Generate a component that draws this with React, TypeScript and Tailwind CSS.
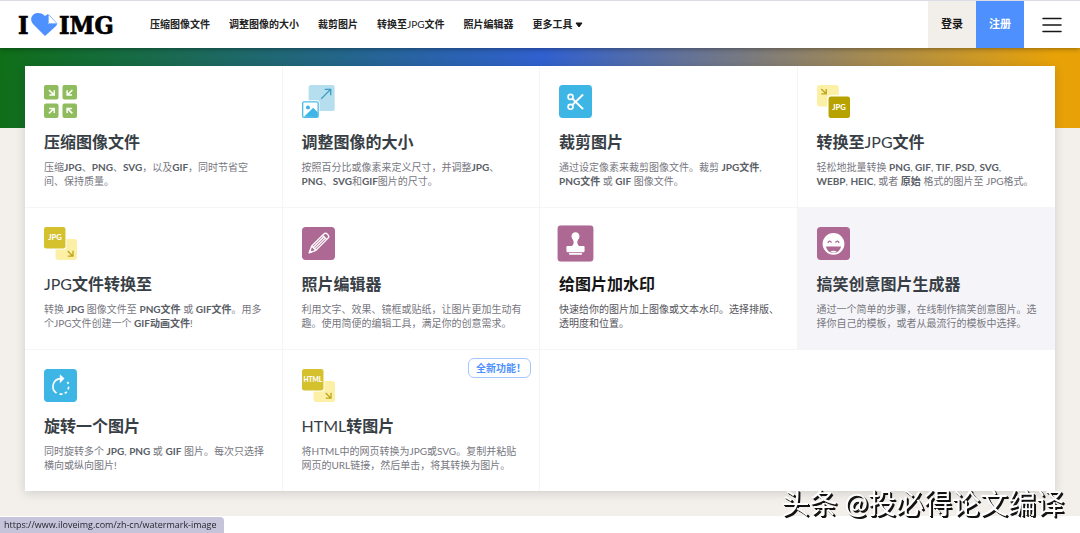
import type { ReactNode } from "react";

type Tool = {
  title: ReactNode;
  text: ReactNode;
  icon: ReactNode;
  slug: string;
  state?: "hover" | "muted";
  badge?: string;
};

const Thin = ({ children }: { children: ReactNode }) => (
  <span className="font-normal">{children}</span>
);

const Icon = ({ children }: { children: ReactNode }) => (
  <svg viewBox="0 0 100 100" className="w-full h-full" aria-hidden="true">
    {children}
  </svg>
);

const CompressIcon = () => (
  <Icon>
    <g fill="#8fbc5d">
      <rect width="44" height="44" rx="6" />
      <rect x="56" width="44" height="44" rx="6" />
      <rect y="56" width="44" height="44" rx="6" />
      <rect x="56" y="56" width="44" height="44" rx="6" />
    </g>
    <g fill="none" stroke="#fff" strokeWidth="4.5">
      <path d="M15 15 30 30M31 16V30H16" />
      <path d="M86 15 71 30M70 16V30H85" />
      <path d="M15 86 30 71M31 85V71H16" />
      <path d="M86 86 71 71M70 85V71H85" />
    </g>
  </Icon>
);

const ResizeIcon = () => (
  <Icon>
    <rect x="20" width="79" height="79" rx="8" fill="#b5dfef" />
    <path
      d="M58 42 87 13M69 13H87V31"
      fill="none"
      stroke="#3a9cc2"
      strokeWidth="4"
    />
    <rect x="-3" y="46" width="56" height="57" rx="7" fill="#fff" />
    <rect
      x="2"
      y="51"
      width="47"
      height="47"
      rx="4"
      fill="#fff"
      stroke="#4cbbe6"
      strokeWidth="4"
    />
    <circle cx="18" cy="68" r="6" fill="#3db6e5" />
    <path d="M6 96 34 69 48 83V97Z" fill="#3db6e5" />
  </Icon>
);

const CropIcon = () => (
  <Icon>
    <rect width="100" height="100" rx="11" fill="#3db6e5" />
    <g fill="none" stroke="#fff" strokeWidth="5">
      <circle cx="35" cy="36" r="7.5" />
      <circle cx="35" cy="66" r="7.5" />
      <path d="M40 41 73 73M40 61 73 29" strokeWidth="6" />
    </g>
  </Icon>
);

const ToJpgIcon = () => (
  <Icon>
    <rect width="66" height="65" rx="8" fill="#fcf0a6" />
    <path
      d="M13 12 27 26M28 12V27H13"
      fill="none"
      stroke="#bda51b"
      strokeWidth="4"
    />
    <rect x="31" y="31" width="72" height="72" rx="9" fill="#fff" />
    <rect x="35" y="35" width="65" height="65" rx="7" fill="#b7a200" />
    <text
      x="67"
      y="75"
      textAnchor="middle"
      fontSize="23"
      fontWeight="900"
      fill="#fff"
    >
      JPG
    </text>
  </Icon>
);

const FromIcon = ({ label, size }: { label: string; size: number }) => (
  <Icon>
    <rect x="35" y="36" width="65" height="64" rx="8" fill="#fcf0a6" />
    <path
      d="M72 73 86 87M88 72V88H72"
      fill="none"
      stroke="#bda51b"
      strokeWidth="4"
    />
    <rect x="-3" y="-3" width="71" height="71" rx="9" fill="#fff" />
    <rect width="65" height="65" rx="7" fill="#d5c02e" />
    <text
      x="33"
      y="40"
      textAnchor="middle"
      fontSize={size}
      fontWeight="900"
      fill="#fff"
    >
      {label}
    </text>
  </Icon>
);

const EditorIcon = () => (
  <Icon>
    <rect width="100" height="100" rx="11" fill="#ad6993" />
    <g
      fill="none"
      stroke="#fff"
      strokeWidth="4"
      strokeLinejoin="round"
      transform="rotate(45 50 50)"
    >
      <path d="M41 18Q41 11 50 11Q59 11 59 18V70L50 90L41 70Z" />
      <path d="M41 24H59M47 26V68M53 26V68M41 70H59" />
      <path d="M47 83H53L50 89Z" fill="#fff" />
    </g>
  </Icon>
);

const StampIcon = () => (
  <Icon>
    <rect width="100" height="100" rx="11" fill="#ad6993" />
    <g fill="#fff">
      <path d="M50 19C57 19 61 24 61 30C61 37 55 40 55 46C55 51 57 54 60 57H40C43 54 45 51 45 46C45 40 39 37 39 30C39 24 43 19 50 19Z" />
      <rect x="25" y="57" width="50" height="17" rx="3" />
      <rect x="32" y="76" width="36" height="5" rx="2" />
    </g>
  </Icon>
);

const MemeIcon = () => (
  <Icon>
    <rect width="100" height="100" rx="11" fill="#ad6993" />
    <circle cx="50" cy="51" r="33" fill="#fff" />
    <path
      d="M33 48Q38 38 44 47M56 47Q62 38 67 48"
      fill="none"
      stroke="#ad6993"
      strokeWidth="4"
    />
    <path d="M27 59H73Q69 78 50 78Q31 78 27 59Z" fill="#ad6993" />
    <path d="M40 75Q50 69 60 75Q50 79 40 75Z" fill="#fff" />
  </Icon>
);

const RotateIcon = () => (
  <Icon>
    <rect width="100" height="100" rx="11" fill="#3db6e5" />
    <path d="M48 16 62 29 48 43Z" fill="#fff" />
    <g fill="none" stroke="#fff" strokeWidth="5">
      <path d="M50 29A24 24 0 0 0 38 73" />
      <path d="M47 76H56M63 74 69 69M73 62 75 54M74 45 71 39" />
    </g>
  </Icon>
);

const nav: { label: ReactNode; slug: string }[] = [
  { label: "压缩图像文件", slug: "compress-image" },
  { label: "调整图像的大小", slug: "resize-image" },
  { label: "裁剪图片", slug: "crop-image" },
  {
    label: (
      <>
        转换至<Thin>JPG</Thin>文件
      </>
    ),
    slug: "convert-to-jpg",
  },
  { label: "照片编辑器", slug: "photo-editor" },
];

const tools: Tool[] = [
  {
    title: "压缩图像文件",
    slug: "compress-image",
    icon: <CompressIcon />,
    text: (
      <>
        压缩<b>JPG</b>、<b>PNG</b>、<b>SVG</b>，以及<b>GIF</b>
        ，同时节省空间、保持质量。
      </>
    ),
  },
  {
    title: "调整图像的大小",
    slug: "resize-image",
    icon: <ResizeIcon />,
    text: (
      <>
        按照百分比或像素来定义尺寸，并调整<b>JPG</b>、<b>PNG</b>、<b>SVG</b>和
        <b>GIF</b>图片的尺寸。
      </>
    ),
  },
  {
    title: "裁剪图片",
    slug: "crop-image",
    icon: <CropIcon />,
    text: (
      <>
        通过设定像素来裁剪图像文件。裁剪 <b>JPG文件</b>, <b>PNG文件</b> 或{" "}
        <b>GIF</b> 图像文件。
      </>
    ),
  },
  {
    title: (
      <>
        转换至<Thin>JPG</Thin>文件
      </>
    ),
    slug: "convert-to-jpg",
    icon: <ToJpgIcon />,
    text: (
      <>
        轻松地批量转换 <b>PNG</b>, <b>GIF</b>, <b>TIF</b>, <b>PSD</b>,{" "}
        <b>SVG</b>,
        <br />
        <b>WEBP</b>, <b>HEIC</b>, 或者 <b>原始</b> 格式的图片至 JPG格式。
      </>
    ),
  },
  {
    title: (
      <>
        <Thin>JPG</Thin>文件转换至
      </>
    ),
    slug: "convert-from-jpg",
    icon: <FromIcon label="JPG" size={23} />,
    text: (
      <>
        转换 <b>JPG</b> 图像文件至 <b>PNG文件</b> 或 <b>GIF文件</b>
        。用多个JPG文件创建一个 <b>GIF动画文件</b>!
      </>
    ),
  },
  {
    title: "照片编辑器",
    slug: "photo-editor",
    icon: <EditorIcon />,
    text: "利用文字、效果、镜框或贴纸，让图片更加生动有趣。使用简便的编辑工具，满足你的创意需求。",
  },
  {
    title: "给图片加水印",
    slug: "watermark-image",
    icon: <StampIcon />,
    state: "hover",
    text: "快速给你的图片加上图像或文本水印。选择排版、透明度和位置。",
  },
  {
    title: "搞笑创意图片生成器",
    slug: "meme-generator",
    icon: <MemeIcon />,
    state: "muted",
    text: "通过一个简单的步骤，在线制作搞笑创意图片。选择你自己的模板，或者从最流行的模板中选择。",
  },
  {
    title: "旋转一个图片",
    slug: "rotate-image",
    icon: <RotateIcon />,
    text: (
      <>
        同时旋转多个 <b>JPG</b>, <b>PNG</b> 或 <b>GIF</b>{" "}
        图片。每次只选择横向或纵向图片!
      </>
    ),
  },
  {
    title: (
      <>
        <Thin>HTML</Thin>转图片
      </>
    ),
    slug: "html-to-image",
    icon: <FromIcon label="HTML" size={20} />,
    badge: "全新功能！",
    text: "将HTML中的网页转换为JPG或SVG。复制并粘贴网页的URL链接，然后单击，将其转换为图片。",
  },
];

const Logo = () => (
  <a href="#home" aria-label="I love IMG" className="w-[95px] shrink-0">
    <svg viewBox="0 0 95 32" className="w-full overflow-visible">
      <g
        fontFamily="'DejaVu Serif Condensed', 'DejaVu Serif', serif"
        fontWeight="700"
        fontSize="25"
        stroke="#000"
        strokeWidth="0.7"
      >
        <text x="0" y="25">
          I
        </text>
        <text x="41" y="25">
          IMG
        </text>
      </g>
      <path
        d="M27 27 15 15C11 10 14 4 20 4C23 4 25 5 27 7L30 5V15H39C39 16 38 17 37 18Z"
        fill="#4d90fe"
      />
      <path
        d="M30.5 5.500 39 14.500H30.500Z"
        fill="#fff"
        stroke="#8db7fe"
        strokeWidth="1"
      />
    </svg>
  </a>
);

const Header = () => (
  <header className="relative z-10 flex h-12 items-stretch border-t border-[#dcdce4] bg-white pl-[18px] shadow-[0_1px_5px_rgba(0,0,0,0.35)]">
    <div className="flex flex-1 items-center gap-[37px]">
      <Logo />
      <nav className="flex items-center gap-[19px] whitespace-nowrap text-[10px] font-bold text-[#222]">
        {nav.map(({ label, slug }) => (
          <a key={slug} href={`#${slug}`}>
            {label}
          </a>
        ))}
        <button type="button" className="flex items-center gap-0.5">
          更多工具
          <svg viewBox="0 0 8 6" className="w-2 h-1.5" aria-hidden="true">
            <path d="M1 1H7L4 5Z" fill="#161616" stroke="#161616" />
          </svg>
        </button>
      </nav>
    </div>
    <a
      href="#login"
      className="flex w-12 items-center justify-center bg-[#f2efea] text-[11px] font-bold text-[#161616]"
    >
      登录
    </a>
    <a
      href="#register"
      className="flex w-12 items-center justify-center bg-[#4d90fe] text-[11px] font-bold text-white"
    >
      注册
    </a>
    <button
      type="button"
      aria-label="Menu"
      className="flex w-14 items-center justify-center"
    >
      <svg viewBox="0 0 20 16" className="w-5 h-4" aria-hidden="true">
        <path
          d="M1 1.500H19M1 8H19M1 14.500H19"
          stroke="#161616"
          strokeWidth="1.500"
          strokeLinecap="round"
        />
      </svg>
    </button>
  </header>
);

const ToolCard = ({ title, text, icon, slug, state, badge }: Tool) => (
  <a
    href={`#${slug}`}
    className={`relative block border-[#f5f5f7] pb-[19px] pl-[19px] pr-4 pt-[19px] [&:nth-child(-n+8)]:border-b [&:not(:nth-child(4n))]:border-r ${
      state === "muted" ? "bg-[#f5f5f9]" : "bg-white"
    }`}
  >
    <div
      className={`mb-[14px] w-[33px] h-[33px] ${state === "hover" ? "scale-110" : ""}`}
    >
      {icon}
    </div>
    <h3
      className={`mb-2 text-base leading-5 font-bold ${
        state === "hover" ? "text-[#161616]" : "text-[#383e45]"
      }`}
    >
      {title}
    </h3>
    <p
      className={`text-[10px] leading-[14px] [&_b]:font-bold ${
        state === "hover" ? "text-[#55555c]" : "text-[#77777f] [&_b]:text-[#5a5e66]"
      }`}
    >
      {text}
    </p>
    {badge && (
      <span className="absolute right-2 top-2 rounded-md border border-[#a6c7ff] pl-[7px] pr-1 text-[10px] leading-[18px] font-bold text-[#4d90fe]">
        {badge}
      </span>
    )}
  </a>
);

export default function App() {
  return (
    <div className="bg-white font-['Lato','Noto_Sans_CJK_SC',sans-serif]">
      <Header />

      <main className="bg-[#f3f0ec] bg-[linear-gradient(95deg,#0f6f17,#3060cf_50%,#e8a208_97%)] bg-[length:100%_80px] bg-no-repeat px-[25px] pb-[25px] pt-[18px]">
        <section className="grid grid-cols-4 bg-white shadow-[0_2px_10px_rgba(0,0,0,0.15)]">
          {tools.map((tool) => (
            <ToolCard key={tool.slug} {...tool} />
          ))}
        </section>
      </main>

      <footer className="fixed bottom-0 left-0 rounded-tr-sm bg-[#c5c4da] pl-1 pr-[7px] font-['Open_Sans',sans-serif] text-[9px] leading-4 text-[#26262e]">
        https://www.iloveimg.com/zh-cn/watermark-image
      </footer>

      <p className="fixed bottom-3.5 right-4 z-20 whitespace-nowrap text-[28px] leading-8 text-white [text-shadow:1px_1px_0_#111,2px_2px_0_#111]">
        头条 @投必得论文编译
      </p>
    </div>
  );
}
